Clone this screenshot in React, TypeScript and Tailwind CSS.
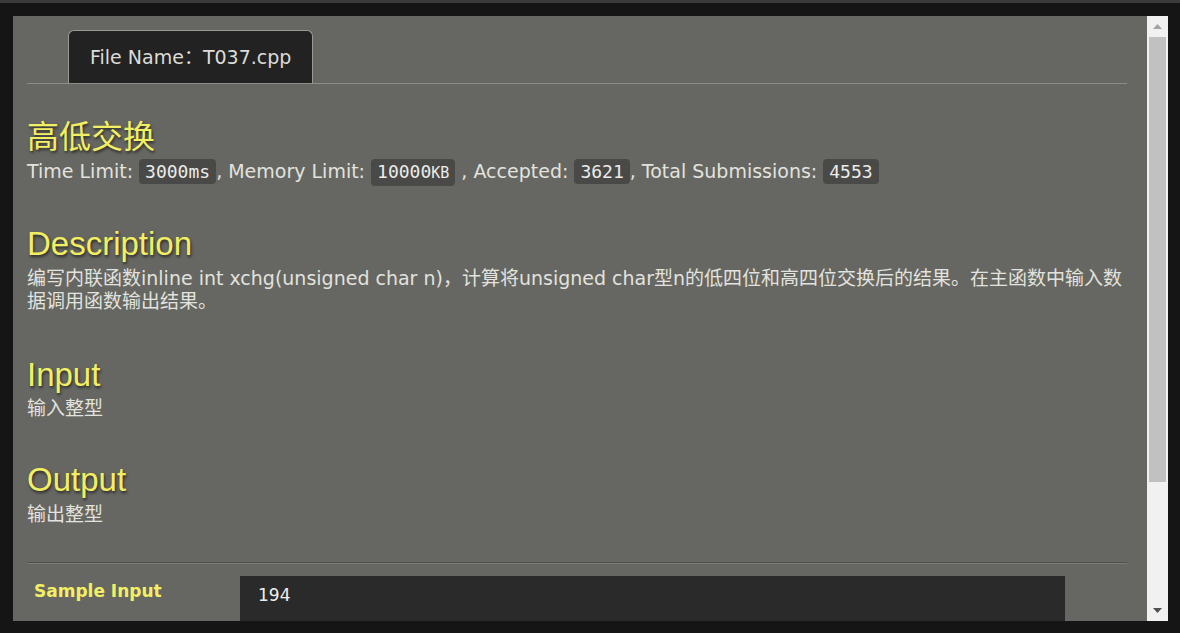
import React from 'react'

const body = "'DejaVu Sans', 'Noto Sans CJK SC', sans-serif"
const heading = "'Liberation Sans', Arial, 'Noto Sans CJK SC', sans-serif"
const mono = "'DejaVu Sans Mono', 'Liberation Mono', monospace"

function Code({ children }: { children: React.ReactNode }) {
  return (
    <span
      className="inline-block rounded-[4px] bg-[#494947] px-[6px] leading-[25px] text-[18px] text-[#ececea]"
      style={{ fontFamily: mono }}
    >
      {children}
    </span>
  )
}

function Heading({ children, className = '' }: { children: React.ReactNode; className?: string }) {
  return (
    <h2
      className={`text-[33px] leading-[38px] text-[#f3ef62] [text-shadow:1px_2px_3px_rgba(0,0,0,0.6)] ${className}`}
      style={{ fontFamily: heading }}
    >
      {children}
    </h2>
  )
}

export default function App() {
  return (
    <div className="h-[633px] w-[1180px] overflow-hidden bg-[#151515]">
      {/* dimmed page behind the modal */}
      <div className="h-[3px] bg-[#3b3b3b]" />

      <div className="ml-[13px] mt-[13px] flex h-[605px] w-[1155px]">
        {/* content */}
        <div className="h-full flex-1 overflow-hidden bg-[#666762] pl-[14px] pr-[20px] pt-[14px]" style={{ fontFamily: body }}>
          {/* tab bar */}
          <div className="flex border-b border-[#8d8d88] pl-[41px]">
            <div className="rounded-t-[6px] border border-b-0 border-[#9a9a95] bg-[#222222] px-[21px] text-[19px] leading-[52px] text-[#dcdcd8]">
              File Name：T037.cpp
            </div>
          </div>

          <h1
            className="mt-[31px] text-[32px] leading-[38px] text-[#f3ef62] [text-shadow:1px_2px_3px_rgba(0,0,0,0.6)]"
            style={{ fontFamily: "'Noto Sans CJK SC', sans-serif" }}
          >
            高低交换
          </h1>

          <p className="mt-[5px] text-[19px] leading-[26px] text-[#e2e2de]">
            Time Limit: <Code>3000ms</Code>, Memory Limit: <Code>10000<span className="text-[15px]">KB</span></Code>{' '}
            , Accepted: <Code>3621</Code>, Total Submissions: <Code>4553</Code>
          </p>

          <Heading className="mt-[39px]">Description</Heading>
          <p className="mt-[4px] text-[19px] leading-[23px] text-[#e2e2de]">
            编写内联函数inline int xchg(unsigned char n)，计算将unsigned char型n的低四位和高四位交换后的结果。在主函数中输入数据调用函数输出结果。
          </p>

          <Heading className="mt-[43px]">Input</Heading>
          <p className="mt-[3px] text-[19px] leading-[23px] text-[#e2e2de]">输入整型</p>

          <Heading className="mt-[41px]">Output</Heading>
          <p className="mt-[4px] text-[19px] leading-[23px] text-[#e2e2de]">输出整型</p>

          <div className="mt-[36px] border-t border-b border-t-[#4f4f4c] border-b-[#7d7d78]" />

          <div className="mt-[12px] flex">
            <div className="w-[213px] pl-[7px] pt-[4px] text-[17px] font-bold leading-[23px] text-[#f3ef62]">
              Sample Input
            </div>
            <div className="h-[50px] w-[825px] bg-[#2a2a2a] pl-[18px] pt-[7px] text-[17px] leading-[24px] text-[#eeeeee]">
              194
            </div>
          </div>
        </div>

        {/* scrollbar */}
        <div className="flex h-full w-[21px] flex-col bg-[#f1f1f1]">
          <div className="flex h-[21px] items-center justify-center">
            <svg width="9" height="5" viewBox="0 0 9 5">
              <path d="M0 5 L4.5 0 L9 5 Z" fill="#a3a3a3" />
            </svg>
          </div>
          <div className="mx-[2px] h-[445px] bg-[#c1c1c1]" />
          <div className="flex-1" />
          <div className="flex h-[21px] items-center justify-center">
            <svg width="9" height="5" viewBox="0 0 9 5">
              <path d="M0 0 L9 0 L4.5 5 Z" fill="#505050" />
            </svg>
          </div>
        </div>
      </div>
    </div>
  )
}
